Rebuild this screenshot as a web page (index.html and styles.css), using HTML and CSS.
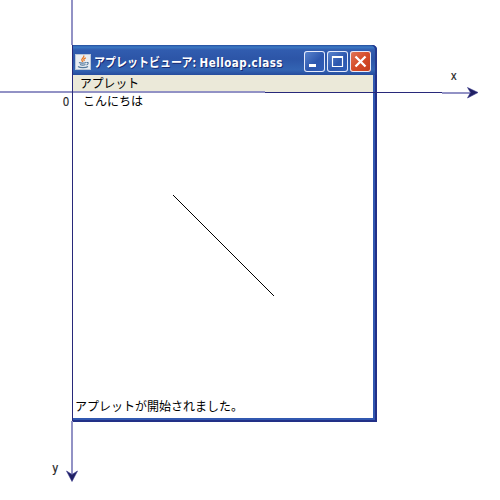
FILE: index.html
```
<!DOCTYPE html>
<html lang="ja">
<head>
<meta charset="utf-8">
<title>アプレットビューア</title>
<link rel="stylesheet" href="styles.css">
</head>
<body>
<main class="stage">
  <section class="window">
    <header class="titlebar">
      <svg class="app-icon" width="16" height="16" viewBox="0 0 16 16">
        <rect x=".5" y=".5" width="15" height="15" fill="#e9edf2" stroke="#b9c6d8"/>
        <path d="M8.6 1.5c1.6 2-3.2 3-1.6 5.2l.8 1.2M10.8 3.8c-2.4 1-2.4 1.8-1.4 3.2" fill="none" stroke="#e87722" stroke-width="1.3"/>
        <path d="M4 8.500c1 .8 5.500.8 7 0M5 10.500c1.500.7 4 .7 5.500 0M3 12.500c2 1.500 8 1.500 10 0M11.500 8.500c2.500-.5 2 1.800 0 2.500" fill="none" stroke="#54799c" stroke-width="1.100"/>
      </svg>
      <svg class="title" width="190" height="18">
        <text x="0" y="14" textLength="102" lengthAdjust="spacingAndGlyphs">アプレットビューア:</text>
        <text class="latin" x="105.500" y="14" textLength="83" lengthAdjust="spacing">Helloap.class</text>
      </svg>
      <nav class="controls">
        <svg class="control" viewBox="0 0 21 21"><path d="M5 14.500h7" stroke="#fff" stroke-width="3"/></svg>
        <svg class="control" viewBox="0 0 21 21"><path d="M5.500 5.500h10v10h-10zM5 6.500h11" fill="none" stroke="#fff" stroke-width="1.200"/></svg>
        <svg class="control close" viewBox="0 0 21 21"><path d="M5.500 5.500l10 10m0-10l-10 10" stroke="#fff" stroke-width="2.300"/></svg>
      </nav>
    </header>
    <div class="menubar">
      <svg class="label" width="60" height="17"><text x="0" y="13" textLength="59" lengthAdjust="spacingAndGlyphs">アプレット</text></svg>
    </div>
    <div class="canvas">
      <svg class="label greeting" width="64" height="17"><text x="0" y="13" textLength="60" lengthAdjust="spacingAndGlyphs">こんにちは</text></svg>
    </div>
    <footer class="status">
      <svg class="label" width="172" height="18"><text x="0" y="14" textLength="168" lengthAdjust="spacingAndGlyphs">アプレットが開始されました。</text></svg>
    </footer>
  </section>
  <svg class="axes" width="500" height="500">
    <path class="axis-soft" d="M72 0V45M72 421V474M442 93H470"/>
    <path class="axis-soft" d="M0 92H265"/>
    <path class="axis" d="M265 92.500H442M72.500 45V421"/>
    <path class="head" d="M478 92.500L467.500 87.500L470.500 92.500L467.500 98ZM72 481.500L66.500 471L72 474.500L77.500 471Z"/>
    <path class="segment" d="M173 195L274 296"/>
    <text x="451" y="79.500" textLength="5.500" lengthAdjust="spacingAndGlyphs">x</text>
    <text x="52.500" y="471.500" textLength="5.500" lengthAdjust="spacingAndGlyphs">y</text>
    <text x="63" y="106" textLength="6" lengthAdjust="spacingAndGlyphs">0</text>
  </svg>
</main>
</body>
</html>
```
FILE: styles.css
```
body { margin: 0; background: #fff; }
.stage {
  position: relative;
  width: 500px;
  height: 500px;
  box-sizing: border-box;
  padding: 45px 0 0 72px;
  overflow: hidden;
}
svg { display: block; flex: none; }
.window {
  display: flex;
  flex-direction: column;
  box-sizing: border-box;
  width: 305px;
  height: 377px;
  border-radius: 1px 5px 0 0;
  background: #3158b0;
  box-shadow: inset -2px -2px #223087;
}
.titlebar {
  display: flex;
  align-items: center;
  height: 30px;
  box-sizing: border-box;
  padding: 3px 6px 0 3px;
  border-radius: 1px 5px 0 0;
  background: linear-gradient(#244c9d 0, #3c7ac4 2px, #315caf 5px, #2c55a7 14px, #3364b3 25px, #264c9d 30px);
  box-shadow: inset -2px 0 #24398e;
}
.title { margin-left: 3px; overflow: visible; }
.title text {
  font: bold 12.5px "Noto Sans CJK JP", sans-serif;
  fill: #fff;
  text-shadow: 1px 1px #182b72;
}
.title .latin { font: bold 11.5px "DejaVu Sans Condensed", "DejaVu Sans", sans-serif; font-stretch: condensed; }
.controls { display: flex; gap: 2px; margin-left: auto; }
.control {
  width: 21px;
  height: 21px;
  box-sizing: border-box;
  border-radius: 3px;
  background: linear-gradient(135deg, #5c87d0, #2d57ae 55%, #315fb9);
  box-shadow: inset 0 0 0 1px #e5eafa;
}
.close { background: linear-gradient(135deg, #e17a5d, #d54c28 50%, #c33c1c); }
.menubar { height: 17px; margin: 0 4px 0 1px; padding-left: 7px; background: #ebe9d9; }
.canvas { flex: 1; margin: 0 4px 0 1px; padding: 1px 0 0 10px; background: #fff; }
.status { height: 21px; margin: 0 4px 4px 1px; padding-left: 2px; background: #fff; }
.label { overflow: visible; }
.label text { font: 12.5px "Noto Sans CJK JP", sans-serif; fill: #000; }
.axes { position: absolute; inset: 0; }
.axis { stroke: #28297a; stroke-width: 1; }
.axis-soft { stroke: #9292c5; stroke-width: 2; }
.head { fill: #202064; stroke: #343488; stroke-width: .6; }
.segment { stroke: #000; stroke-width: 1; shape-rendering: crispEdges; }
.axes text { font: 12px "Liberation Sans", sans-serif; fill: #222; stroke: #222; stroke-width: .2; }
```
